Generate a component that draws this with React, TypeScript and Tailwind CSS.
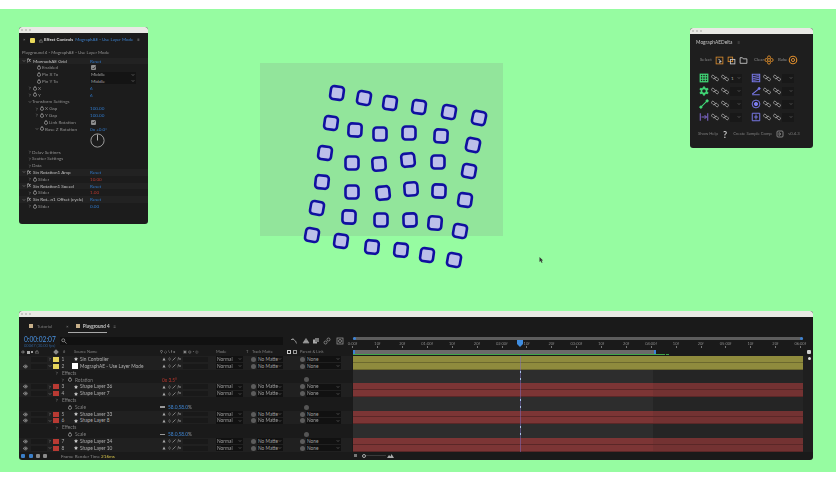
import React from "react";
import { ChevronDown, ChevronRight, Eye, Star, Lock } from "lucide-react";

const squares: [number, number, number][] = [
  [337,93,8],[364,98,10],[390,103,8],[419,107,8],[449,112,10],[479,118,12],
  [331,123,8],[355,130,3],[380,134,0],[409,133,0],[441,136,3],[473,145,12],
  [325,153,8],[352,163,0],[379,164,-4],[408,160,-6],[438,162,0],[469,171,10],
  [322,182,6],[352,192,0],[383,193,-6],[411,189,-4],[439,191,2],[465,200,8],
  [317,208,10],[349,217,2],[381,220,0],[410,220,-2],[435,223,5],[460,231,10],
  [312,235,10],[341,241,8],[372,247,6],[401,250,6],[427,255,8],[454,260,10],
];

function Stopwatch() {
  return (
    <svg width="4" height="5" viewBox="0 0 8 10" className="shrink-0">
      <circle cx="4" cy="5.6" r="3.2" fill="none" stroke="#b8b8b8" strokeWidth="1.2" />
      <path d="M3 1h2M4 1v1.6" stroke="#b8b8b8" strokeWidth="1" />
    </svg>
  );
}

function Chev({ open }: { open?: boolean }) {
  return open ? (
    <ChevronDown size={4} strokeWidth={3} color="#999" className="shrink-0" />
  ) : (
    <ChevronRight size={4} strokeWidth={3} color="#999" className="shrink-0" />
  );
}

function ERow({
  pad, chev, open, kind, label, value, valueClass, shade,
}: {
  pad: string; chev?: boolean; open?: boolean; kind?: "fx" | "watch"; label: string;
  value?: React.ReactNode; valueClass?: string; shade?: boolean;
}) {
  return (
    <div className={`flex h-[6.8px] items-center ${shade ? "bg-[#222222]" : ""}`}>
      <div className={`flex min-w-0 flex-1 items-center ${pad}`}>
        <div className="flex w-[4px] shrink-0 justify-center">{chev && <Chev open={open} />}</div>
        {kind === "fx" && <span className="mr-[2px] ml-[1px] w-[4px] text-[5px] italic text-[#c8c8c8]">fx</span>}
        {kind === "watch" && <span className="mr-[1px] ml-[1px] flex w-[4px] justify-center"><Stopwatch /></span>}
        <span className={`truncate text-[4.6px] leading-none ${kind === "fx" ? "text-[#c0c0c0]" : "text-[#909090]"}`}>{label}</span>
      </div>
      <div className={`w-[58px] shrink-0 text-[4.6px] leading-none ${valueClass ?? "text-[#2f78c8]"}`}>{value}</div>
    </div>
  );
}

function Drop({ text }: { text: string }) {
  return (
    <div className="flex h-[6px] w-[46px] items-center justify-between bg-[#141414] pl-[1px] pr-[1px] text-[#a0a0a0]">
      <span>{text}</span>
      <ChevronDown size={4} strokeWidth={3} color="#999" />
    </div>
  );
}

function Check() {
  return (
    <div className="ml-[1px] flex h-[5px] w-[5px] items-center justify-center rounded-[1px] bg-[#8d8d8d]">
      <svg width="4" height="4" viewBox="0 0 8 8"><path d="M1 4l2 2 4-5" fill="none" stroke="#222" strokeWidth="1.6" /></svg>
    </div>
  );
}

function TitleBar() {
  return (
    <div className="flex h-[6px] shrink-0 items-center gap-[2px] rounded-t-[2px] bg-[#e9e9e4] pl-[2px]">
      <span className="h-[2px] w-[2px] rounded-full bg-[#bdbdb8]" />
      <span className="h-[2px] w-[2px] rounded-full bg-[#bdbdb8]" />
      <span className="h-[2px] w-[2px] rounded-full bg-[#bdbdb8]" />
    </div>
  );
}

function EffectControls() {
  return (
    <div className="absolute top-[18px] left-[19px] flex h-[197px] w-[129px] flex-col overflow-hidden whitespace-nowrap rounded-[3px] bg-[#1c1c1c] blur-[0.35px] font-['Lato',sans-serif]">
      <TitleBar />
      <div className="flex h-[15px] shrink-0 items-center pl-[4px] text-[4.4px] leading-none">
        <span className="w-[7px] text-[#888]">×</span>
        <span className="h-[5px] w-[5px] rounded-[1px] bg-[#e9d95a]" />
        <Lock size={4} color="#aaa" className="ml-[4px]" />
        <span className="ml-[1px] font-bold text-[#d8d8d8]">Effect Controls</span>
        <span className="ml-[2px] text-[#3c80cc]">MographAE - Use Layer Mode</span>
        <span className="ml-[4px] text-[#888]">≡</span>
      </div>
      <div className="flex h-[9.6px] shrink-0 items-center pl-[3px] text-[4.4px] leading-none text-[#909090]">Playground 4 - MographAE - Use Layer Mode</div>
      <ERow pad="pl-[3px]" chev open kind="fx" label="MographAE Grid" value="Reset" shade />
      <ERow pad="pl-[13px]" kind="watch" label="Enabled" value={<Check />} />
      <ERow pad="pl-[13px]" kind="watch" label="Pin X To" value={<Drop text="Middle" />} />
      <ERow pad="pl-[13px]" kind="watch" label="Pin Y To" value={<Drop text="Middle" />} />
      <ERow pad="pl-[9px]" chev kind="watch" label="X" value="6" />
      <ERow pad="pl-[9px]" chev kind="watch" label="Y" value="6" />
      <ERow pad="pl-[9px]" chev open label="Transform Settings" />
      <ERow pad="pl-[16px]" chev kind="watch" label="X Gap" value="100.00" />
      <ERow pad="pl-[16px]" chev kind="watch" label="Y Gap" value="100.00" />
      <ERow pad="pl-[20px]" kind="watch" label="Link Rotation" value={<Check />} />
      <ERow pad="pl-[16px]" chev open kind="watch" label="Base Z Rotation" value="0x +0.0°" />
      <div className="flex h-[16.2px] shrink-0 items-center justify-start pl-[71px]">
        <svg width="15" height="15" viewBox="0 0 15 15">
          <circle cx="7.5" cy="7.5" r="6.6" fill="none" stroke="#a8a8a8" strokeWidth="0.9" />
          <path d="M7.5 7.5V1.5" stroke="#c0c0c0" strokeWidth="0.9" />
        </svg>
      </div>
      <ERow pad="pl-[9px]" chev label="Delay Settings" />
      <ERow pad="pl-[9px]" chev label="Scatter Settings" />
      <ERow pad="pl-[9px]" chev label="Data" />
      <ERow pad="pl-[3px]" chev open kind="fx" label="Sin Rotation1 Amp" value="Reset" shade />
      <ERow pad="pl-[9px]" chev kind="watch" label="Slider" value="10.00" valueClass="text-[#b8372e]" />
      <ERow pad="pl-[3px]" chev open kind="fx" label="Sin Rotation1 Speed" value="Reset" shade />
      <ERow pad="pl-[9px]" chev kind="watch" label="Slider" value="1.00" valueClass="text-[#b8372e]" />
      <ERow pad="pl-[3px]" chev open kind="fx" label="Sin Rot...n1 Offset (cycle)" value="Reset" shade />
      <ERow pad="pl-[9px]" chev kind="watch" label="Slider" value="0.00" />
    </div>
  );
}

function LinkIcon() {
  return (
    <svg width="8" height="8" viewBox="0 0 16 16" className="shrink-0">
      <rect x="2.2" y="2" width="5" height="8" rx="2.5" transform="rotate(-45 4.7 6)" fill="none" stroke="#b0b0b0" strokeWidth="1.5" />
      <rect x="8.8" y="6" width="5" height="8" rx="2.5" transform="rotate(-45 11.3 10)" fill="none" stroke="#b0b0b0" strokeWidth="1.5" />
    </svg>
  );
}

function Tool({ kind, color }: { kind: number; color: string }) {
  const s = { fill: "none", stroke: color, strokeWidth: 1.5 };
  return (
    <svg width="10" height="10" viewBox="0 0 16 16" className="shrink-0">
      {kind === 0 && (
        <g {...s}><rect x="2" y="2" width="12" height="12" strokeWidth="2" /><path d="M6 2v12M10 2v12M2 6h12M2 10h12" strokeWidth="1.6" /></g>
      )}
      {kind === 1 && (
        <g {...s}><circle cx="8" cy="8" r="4" strokeWidth="2.2" /><circle cx="8" cy="2.5" r="1.4" fill={color} /><circle cx="8" cy="13.5" r="1.4" fill={color} /><circle cx="3" cy="5" r="1.4" fill={color} /><circle cx="13" cy="5" r="1.4" fill={color} /><circle cx="3" cy="11" r="1.4" fill={color} /><circle cx="13" cy="11" r="1.4" fill={color} /></g>
      )}
      {kind === 2 && (
        <g {...s}><path d="M3 13L13 3" strokeWidth="1.8" /><circle cx="3" cy="13" r="1.8" fill={color} /><circle cx="13" cy="3" r="1.8" fill={color} /></g>
      )}
      {kind === 3 && (
        <g {...s}><path d="M2 2v12M14 2v12M4 8h8M9 5l3 3-3 3" /></g>
      )}
      {kind === 4 && (
        <g {...s}><rect x="2" y="2" width="12" height="12" /><path d="M2 5c3 2 9-2 12 0M2 8c3 2 9-2 12 0M2 11c3 2 9-2 12 0" /></g>
      )}
      {kind === 5 && (
        <g {...s}><path d="M2 13L12 5" strokeWidth="1.8" /><path d="M2 14h12" /><circle cx="13" cy="4" r="1.6" fill={color} /></g>
      )}
      {kind === 6 && (
        <g {...s}><circle cx="8" cy="8" r="6.2" /><circle cx="8" cy="8" r="2.6" fill={color} /></g>
      )}
      {kind === 7 && (
        <g {...s}><path d="M2 2v12M14 2v12M2 2h12M2 14h12M8 4v8M5 8h6" /></g>
      )}
    </svg>
  );
}

function DeltaCell({ kind, color, value }: { kind: number; color: string; value?: string }) {
  return (
    <div className="flex w-[52px] items-center">
      <span className="flex w-[9px] justify-center"><Tool kind={kind} color={color} /></span>
      <span className="ml-[3px]"><LinkIcon /></span>
      <span className="ml-[2px]"><LinkIcon /></span>
      <div className="ml-[1px] flex h-[9px] w-[12px] items-center justify-between bg-[#181818] pl-[1px] pr-[1px] text-[4.6px] text-[#aaa]">
        <span>{value ?? ""}</span>
        <ChevronDown size={4} strokeWidth={3} color="#888" />
      </div>
    </div>
  );
}

function Delta() {
  return (
    <div className="absolute top-[19px] left-[690px] flex h-[120px] w-[123px] flex-col overflow-hidden whitespace-nowrap rounded-[3px] bg-[#1e1e1e] blur-[0.35px] font-['Lato',sans-serif] text-[#8a8a8a]">
      <TitleBar />
      <div className="flex h-[16px] shrink-0 items-center pl-[6px] text-[4.8px] leading-none text-[#c4c4c4]">
        MographAEDelta<span className="ml-[5px] text-[#888]">≡</span>
      </div>
      <div className="mt-[5px] flex h-[10px] shrink-0 items-center pl-[10px] text-[4.4px] leading-none">
        <span className="w-[15px]">Select</span>
        <svg width="9" height="9" viewBox="0 0 16 16" className="shrink-0"><rect x="2" y="2" width="12" height="12" fill="none" stroke="#d88a2c" strokeWidth="1.5" /><path d="M6 5l5 5-3 0 1 3" fill="none" stroke="#ddd" strokeWidth="1.6" /></svg>
        <svg width="9" height="9" viewBox="0 0 16 16" className="ml-[3px] shrink-0"><rect x="2" y="2" width="8" height="8" fill="none" stroke="#d88a2c" strokeWidth="1.5" /><rect x="6" y="6" width="8" height="8" fill="none" stroke="#ccc" strokeWidth="1.5" /></svg>
        <svg width="9" height="9" viewBox="0 0 16 16" className="ml-[3px] shrink-0"><path d="M2 3h4l1.5 2H14v8H2z" fill="none" stroke="#ccc" strokeWidth="1.5" /></svg>
        <span className="ml-[6px] w-[10px]">Clear</span>
        <svg width="10" height="10" viewBox="0 0 16 16" className="shrink-0"><g fill="none" stroke="#d88a2c" strokeWidth="1.5"><circle cx="8" cy="3.8" r="2.4" /><circle cx="8" cy="12.2" r="2.4" /><circle cx="3.8" cy="8" r="2.4" /><circle cx="12.2" cy="8" r="2.4" /></g></svg>
        <span className="ml-[4px] w-[10px]">Bake</span>
        <svg width="10" height="10" viewBox="0 0 16 16" className="shrink-0"><circle cx="8" cy="8" r="6" fill="none" stroke="#d88a2c" strokeWidth="1.8" /><circle cx="8" cy="8" r="2.5" fill="none" stroke="#d88a2c" strokeWidth="1.6" /></svg>
      </div>
      <div className="mt-[8px] flex flex-col gap-[3px] pl-[9px]">
        <div className="flex h-[10px] items-center"><DeltaCell kind={0} color="#41d977" value="1" /><DeltaCell kind={4} color="#7c7cf0" /></div>
        <div className="flex h-[10px] items-center"><DeltaCell kind={1} color="#41d977" /><DeltaCell kind={5} color="#7c7cf0" /></div>
        <div className="flex h-[10px] items-center"><DeltaCell kind={2} color="#41d977" /><DeltaCell kind={6} color="#7c7cf0" /></div>
        <div className="flex h-[10px] items-center"><DeltaCell kind={3} color="#8a6fe0" /><DeltaCell kind={7} color="#7c7cf0" /></div>
      </div>
      <div className="mt-[7px] flex h-[10px] shrink-0 items-center pl-[8px] text-[4.2px] leading-none text-[#7c7c7c]">
        <span className="w-[22px]">Show Help</span>
        <span className="ml-[3px] text-[9px] font-bold leading-none text-[#c8c8c8]">?</span>
        <span className="ml-[6px] w-[42px]">Create Sample Comp</span>
        <svg width="8" height="8" viewBox="0 0 16 16" className="ml-[1px] shrink-0"><rect x="2" y="2" width="12" height="12" rx="2" fill="none" stroke="#aaa" strokeWidth="1.4" /><path d="M6 5l4 3-4 3z" fill="none" stroke="#aaa" strokeWidth="1.2" /></svg>
        <span className="ml-[4px]">v0.4.3</span>
      </div>
    </div>
  );
}

type Layer = {
  type: "layer" | "effects" | "prop";
  n?: number; name: string; label?: string; open?: boolean; src?: "star" | "solid"; value?: string; track: "yellow" | "dark" | "red";
};

const layers: Layer[] = [
  { type: "layer", n: 1, name: "Sin Controller", label: "bg-[#e5d35b]", src: "star", track: "yellow" },
  { type: "layer", n: 2, name: "MographAE - Use Layer Mode", label: "bg-[#e5d35b]", src: "solid", open: true, track: "yellow" },
  { type: "effects", name: "Effects", track: "dark" },
  { type: "prop", name: "Rotation", value: "rot", track: "dark" },
  { type: "layer", n: 3, name: "Shape Layer 36", label: "bg-[#b83a33]", src: "star", track: "red" },
  { type: "layer", n: 4, name: "Shape Layer 7", label: "bg-[#b83a33]", src: "star", open: true, track: "red" },
  { type: "effects", name: "Effects", track: "dark" },
  { type: "prop", name: "Scale", value: "scale", track: "dark" },
  { type: "layer", n: 5, name: "Shape Layer 33", label: "bg-[#b83a33]", src: "star", track: "red" },
  { type: "layer", n: 6, name: "Shape Layer 8", label: "bg-[#b83a33]", src: "star", open: true, track: "red" },
  { type: "effects", name: "Effects", track: "dark" },
  { type: "prop", name: "Scale", value: "scale", track: "dark" },
  { type: "layer", n: 7, name: "Shape Layer 34", label: "bg-[#b83a33]", src: "star", track: "red" },
  { type: "layer", n: 8, name: "Shape Layer 10", label: "bg-[#b83a33]", src: "star", open: true, track: "red" },
];

function Switches() {
  return (
    <div className="flex w-[23px] shrink-0 items-center gap-[1.5px] pl-[2px] text-[4.4px] italic leading-none text-[#aaa]">
      <svg width="4" height="4" viewBox="0 0 8 8"><path d="M1 7l3-6 3 6z" fill="#aaa" /></svg>
      <svg width="3" height="4" viewBox="0 0 6 8"><path d="M3 1l2 3-2 3-2-3z" fill="none" stroke="#888" /></svg>
      <svg width="4" height="4" viewBox="0 0 8 8"><path d="M1 7L7 1" stroke="#bbb" strokeWidth="1.2" /></svg>
      <span>fx</span>
    </div>
  );
}

function DropSmall({ text, w }: { text: string; w: string }) {
  return (
    <div className={`flex h-[6px] shrink-0 items-center justify-between bg-[#111111] pr-[1px] pl-[1px] text-[4.8px] leading-none text-[#a0a0a0] ${w}`}>
      <span>{text}</span>
      <ChevronDown size={4} strokeWidth={3} color="#888" />
    </div>
  );
}

function Dot() {
  return <span className="h-[5px] w-[5px] rounded-full bg-[#5c5c5c]" />;
}

function LayerLeft({ l }: { l: Layer }) {
  if (l.type !== "layer") {
    return (
      <div className="flex h-full w-[333px] shrink-0 items-center text-[4.8px] leading-none text-[#808080]">
        {l.type === "effects" ? (
          <>
            <div className="flex w-[40px] shrink-0 justify-end"><Chev /></div>
            <span className="ml-[3px]">{l.name}</span>
          </>
        ) : (
          <>
            <div className="flex w-[46px] shrink-0 justify-end">{l.value === "rot" && <Chev />}</div>
            <span className="flex w-[10px] shrink-0 justify-center"><Stopwatch /></span>
            <span className="w-[85px] shrink-0">{l.name}</span>
            {l.value === "rot" ? (
              <span className="w-[46px] shrink-0 pl-[2px] text-[#b8372e]">0x 3.5°</span>
            ) : (
              <span className="flex w-[46px] shrink-0 items-center text-[#3f87d6]">
                <span className="mr-[3px] h-[1.5px] w-[5px] shrink-0 bg-[#999]" />58.0,58.0<span className="text-[#999]">%</span>
              </span>
            )}
            <span className="ml-[98px] block h-[5px] w-[5px] shrink-0 rounded-full bg-[#555]" />
          </>
        )}
      </div>
    );
  }
  return (
    <div className="flex h-full w-[333px] shrink-0 items-center bg-[#202020] text-[4.8px] leading-none text-[#a8a8a8]">
      <div className="flex w-[10px] shrink-0 justify-end pr-[1px]">
        {l.n !== 1 && <Eye size={5} color="#bbb" strokeWidth={2.5} />}
      </div>
      <div className="ml-[2px] h-full w-[16px] shrink-0 border-y border-[#202020] bg-[#191919]" />
      <div className="flex w-[6px] shrink-0 justify-center"><Chev open={l.open} /></div>
      <div className={`h-[5px] w-[5.5px] shrink-0 ${l.label}`} />
      <div className="w-[14.5px] shrink-0 pl-[3px]">{l.n}</div>
      <div className="flex w-[5px] shrink-0 justify-center">
        {l.src === "star" ? <Star size={4} fill="#ccc" color="#ccc" /> : <span className="ml-[-2px] h-[6px] w-[6px] shrink-0 bg-white" />}
      </div>
      <div className="w-[82px] shrink-0 truncate pl-[2px] text-[#b0b0b0]">{l.name}</div>
      <Switches />
      <div className="h-full w-[25px] shrink-0 border-y border-[#202020] bg-[#191919]" />
      <div className="w-[8px] shrink-0" />
      <DropSmall text="Normal" w="w-[27px]" />
      <div className="w-[7px] shrink-0" />
      <div className="flex w-[7px] shrink-0 justify-center"><Dot /></div>
      <DropSmall text="No Matte" w="w-[26px]" />
      <div className="w-[15px] shrink-0" />
      <div className="flex w-[8px] shrink-0 justify-center"><Dot /></div>
      <DropSmall text="None" w="w-[35px]" />
    </div>
  );
}

function Track({ t }: { t: Layer["track"] }) {
  if (t === "yellow")
    return <div className="ml-[1px] h-full flex-1 border-b border-[#6c692e] bg-[#8f8b3d]" />;
  if (t === "red")
    return (
      <div className="ml-[1px] flex h-full flex-1 border-b border-[#5a2727]">
        <div className="h-full w-[300px] shrink-0 bg-[#7c3535]" />
        <div className="h-full flex-1 bg-[#733232]" />
      </div>
    );
  return (
    <div className="ml-[1px] flex h-full flex-1">
      <div className="h-full w-[300px] shrink-0 bg-[#2d2d2d]" />
      <div className="h-full flex-1 bg-[#252525]" />
    </div>
  );
}

const ruler = ["0:00f","10f","20f","01:00f","10f","20f","02:00f","10f","20f","03:00f","10f","20f","04:00f","10f","20f","05:00f","10f","20f","06:00f"];

function Timeline() {
  return (
    <div className="absolute top-[302px] left-[19px] flex h-[149px] w-[794px] flex-col overflow-hidden whitespace-nowrap rounded-[3px] bg-[#1a1a1a] blur-[0.35px] font-['Lato',sans-serif]">
      <TitleBar />
      <div className="flex h-[18px] shrink-0 items-center text-[4.6px] leading-none">
        <span className="ml-[10px] h-[4px] w-[4px] bg-[#c8b08a]" />
        <span className="ml-[4px] w-[29px] text-[#7c7c7c]">Tutorial</span>
        <span className="text-[#888]">×</span>
        <span className="ml-[7px] h-[4px] w-[4px] bg-[#c8b08a]" />
        <div className="relative ml-[3px] flex h-full items-center">
          <span className="font-bold text-[#c8c8c8]">Playground 4</span>
          <span className="ml-[4px] text-[#888]">≡</span>
          <span className="absolute top-[14.5px] left-[-15px] h-[1.5px] w-[39px] bg-[#a8a8a8]" />
        </div>
      </div>
      <div className="flex h-[21px] shrink-0">
        <div className="flex w-[333px] shrink-0 flex-col">
          <div className="flex h-[13px] items-start">
            <div className="flex w-[41px] shrink-0 flex-col pl-[5px] pt-[1px]">
              <span className="text-[6.6px] leading-[7px] text-[#4a95e6]">0:00:02:07</span>
              <span className="text-[4px] leading-[5px] text-[#2f5f94]">00067 (30.00 fps)</span>
            </div>
            <div className="mt-[2px] flex h-[8px] w-[223px] shrink-0 items-center bg-[#111111] pl-[1px]">
              <svg width="6" height="6" viewBox="0 0 12 12"><circle cx="4.5" cy="4.5" r="3" fill="none" stroke="#aaa" strokeWidth="1.4" /><path d="M7 7l4 4" stroke="#aaa" strokeWidth="1.4" /></svg>
            </div>
            <div className="mt-[2px] flex h-[8px] items-center">
              <svg width="8" height="8" viewBox="0 0 16 16" className="ml-[7px]"><path d="M2 5h5l4 3 2 5M5 3l3 2" fill="none" stroke="#aaa" strokeWidth="1.6" /></svg>
              <svg width="8" height="8" viewBox="0 0 16 16" className="ml-[4px]"><path d="M2 12l6-9 6 9zM4 9h8" fill="#888" stroke="#aaa" strokeWidth="1.2" /></svg>
              <svg width="8" height="8" viewBox="0 0 16 16" className="ml-[2px]"><rect x="2" y="5" width="8" height="8" fill="#aaa" /><rect x="6" y="2" width="8" height="8" fill="#777" /></svg>
              <svg width="8" height="8" viewBox="0 0 16 16" className="ml-[3px]"><circle cx="5" cy="11" r="3" fill="none" stroke="#999" strokeWidth="1.5" /><circle cx="11" cy="5" r="3" fill="none" stroke="#999" strokeWidth="1.5" /></svg>
              <svg width="8" height="8" viewBox="0 0 16 16" className="ml-[5px]"><rect x="2" y="2" width="12" height="12" fill="none" stroke="#999" strokeWidth="1.5" /><circle cx="8" cy="8" r="3" fill="none" stroke="#999" strokeWidth="1.5" /></svg>
            </div>
          </div>
          <div className="flex h-[8px] items-center text-[4px] leading-none text-[#808080]">
            <div className="flex w-[35px] shrink-0 items-center gap-[1.5px] pl-[2px]">
              <Eye size={4} color="#aaa" strokeWidth={2.5} />
              <span className="h-[3px] w-[3px] bg-[#aaa]" />
              <span className="h-[2px] w-[2px] rounded-full bg-[#ccc]" />
              <Lock size={4} color="#aaa" />
            </div>
            <span className="h-[4px] w-[4px] shrink-0 rotate-45 bg-[#888]" />
            <span className="w-[4px] shrink-0" />
            <span className="w-[12px] shrink-0 pl-[1px]">#</span>
            <span className="w-[86px] shrink-0">Source Name</span>
            <span className="w-[23px] shrink-0 tracking-[1px] text-[#aaa]">⚲◇\fx</span>
            <span className="w-[33px] shrink-0 tracking-[1px] text-[#888]">▣◍◔◎</span>
            <span className="w-[30px] shrink-0">Mode</span>
            <span className="w-[6px] shrink-0">T</span>
            <span className="w-[35px] shrink-0">Track Matte</span>
            <span className="h-[4px] w-[4px] shrink-0 border border-[#ccc]" />
            <span className="ml-[2px] h-[4px] w-[4px] shrink-0 border border-[#999]" />
            <span className="ml-[3px]">Parent &amp; Link</span>
          </div>
        </div>
        <div className="relative flex-1">
          <div className="ml-[1px] mt-[2px] mr-[10px] flex h-[3px] items-center justify-between rounded-full bg-[#5d5d5d]">
            <span className="h-[3px] w-[3px] rounded-full bg-[#3b82d6]" />
            <span className="h-[3px] w-[3px] rounded-full bg-[#3b82d6]" />
          </div>
          <div className="mt-[1px] mr-[12px] flex h-[8px] justify-between">
            {ruler.map((r, i) => (
              <div key={i} className="flex w-[1px] flex-col items-center text-[4px] leading-[5px] text-[#888]">
                <span className="whitespace-nowrap">{r}</span>
                <span className="h-[2px] w-[0.5px] shrink-0 bg-[#777]" />
              </div>
            ))}
          </div>
          <div className="mt-[1px] ml-[1px] flex h-[4px] w-[303px] justify-between bg-[#6a6a6a]">
            <span className="h-[5px] w-[2px] bg-[#3b82d6]" />
            <span className="h-[5px] w-[2px] bg-[#3b82d6]" />
          </div>
          <div className="relative ml-[1px] h-[1px] w-[312px] bg-[#3fa648]">
            <span className="absolute top-[0px] left-[313px] h-[1px] w-[3px] bg-[#3fa648]" />
          </div>
          <svg width="6" height="7" viewBox="0 0 6 7" className="absolute top-[5px] left-[165px]"><path d="M0 0h6v4L3 7 0 4z" fill="#3f8de0" /></svg>
        </div>
      </div>
      <div className="relative shrink-0">
        {layers.map((l, i) => (
          <div key={i} className="flex h-[6.83px]">
            <LayerLeft l={l} />
            <Track t={l.track} />
            <div className="w-[10px] shrink-0 bg-[#1f1f1f]" />
          </div>
        ))}
        <span className="absolute top-0 bottom-0 left-[500.5px] w-[1px] bg-[#8070c8]/50" />
        <span className="absolute top-[15px] left-[500.5px] h-[2px] w-[1.5px] bg-[#a8c4e8]" />
        <span className="absolute top-[22px] left-[500.5px] h-[2px] w-[1.5px] bg-[#a8c4e8]" />
        <span className="absolute top-[43px] left-[500.5px] h-[2px] w-[1.5px] bg-[#a8c4e8]" />
        <span className="absolute top-[50px] left-[500.5px] h-[2px] w-[1.5px] bg-[#a8c4e8]" />
        <span className="absolute top-[70px] left-[500.5px] h-[2px] w-[1.5px] bg-[#a8c4e8]" />
        <span className="absolute top-[77px] left-[500.5px] h-[2px] w-[1.5px] bg-[#a8c4e8]" />
        <span className="absolute top-[-6px] right-[2px] h-[4px] w-[4px] rounded-[1px] bg-[#cfcfcf]" />
        <span className="absolute top-[1px] right-[2px] h-[3px] w-[3px] rounded-full bg-[#e0e0e0]" />
      </div>
      <div className="flex min-h-0 flex-1 items-center text-[4.6px] leading-none">
        <div className="flex w-[333px] shrink-0 items-center pl-[2px]">
          <span className="h-[4px] w-[4px] rounded-[1px] bg-[#3b7fc8]" />
          <span className="ml-[4px] h-[4px] w-[4px] rounded-[1px] bg-[#3b7fc8]" />
          <span className="ml-[3px] h-[4px] w-[4px] rounded-[1px] bg-[#8a8a8a]" />
          <span className="ml-[3px] h-[4px] w-[4px] rounded-[1px] bg-[#8a8a8a]" />
          <span className="ml-[14px] text-[#8a8a8a]">Frame Render Time</span>
          <span className="ml-[1px] text-[#d8c54a]">216ms</span>
        </div>
        <span className="ml-[2px] h-[3px] w-[3px] bg-[#777]" />
        <div className="ml-[5px] flex w-[24px] items-center">
          <span className="h-[4px] w-[4px] shrink-0 rounded-full border border-[#aaa]" />
          <span className="h-[1px] flex-1 bg-[#3a3a3a]" />
        </div>
        <svg width="7" height="4" viewBox="0 0 14 8" className="ml-[1px]"><path d="M0 8l4-6 3 3 2-5 5 8z" fill="#aaa" /></svg>
      </div>
    </div>
  );
}

export default function App() {
  return (
    <div className="h-[484px] w-[836px] overflow-hidden bg-white pt-[9px]">
      <div className="relative h-[463px] w-[836px] bg-[#96fca1]">
        <div className="absolute top-[54px] left-[260px] h-[173px] w-[243px] bg-[#92e59b]" />
        <svg width="836" height="463" viewBox="0 9 836 463" className="absolute top-0 left-0 blur-[0.3px]">
          {squares.map(([x, y, r], i) => (
            <rect key={i} x={x - 6.5} y={y - 6.5} width="13" height="13" rx="3.2" transform={`rotate(${r} ${x} ${y})`} fill="#bcbfe9" stroke="#10109f" strokeWidth="2.6" />
          ))}
          <path d="M539.5 257l0 5 1.2-1 1 2 .8-.4-1-2 1.6-.2z" fill="#333" />
        </svg>
        <EffectControls />
        <Delta />
        <Timeline />
      </div>
    </div>
  );
}
